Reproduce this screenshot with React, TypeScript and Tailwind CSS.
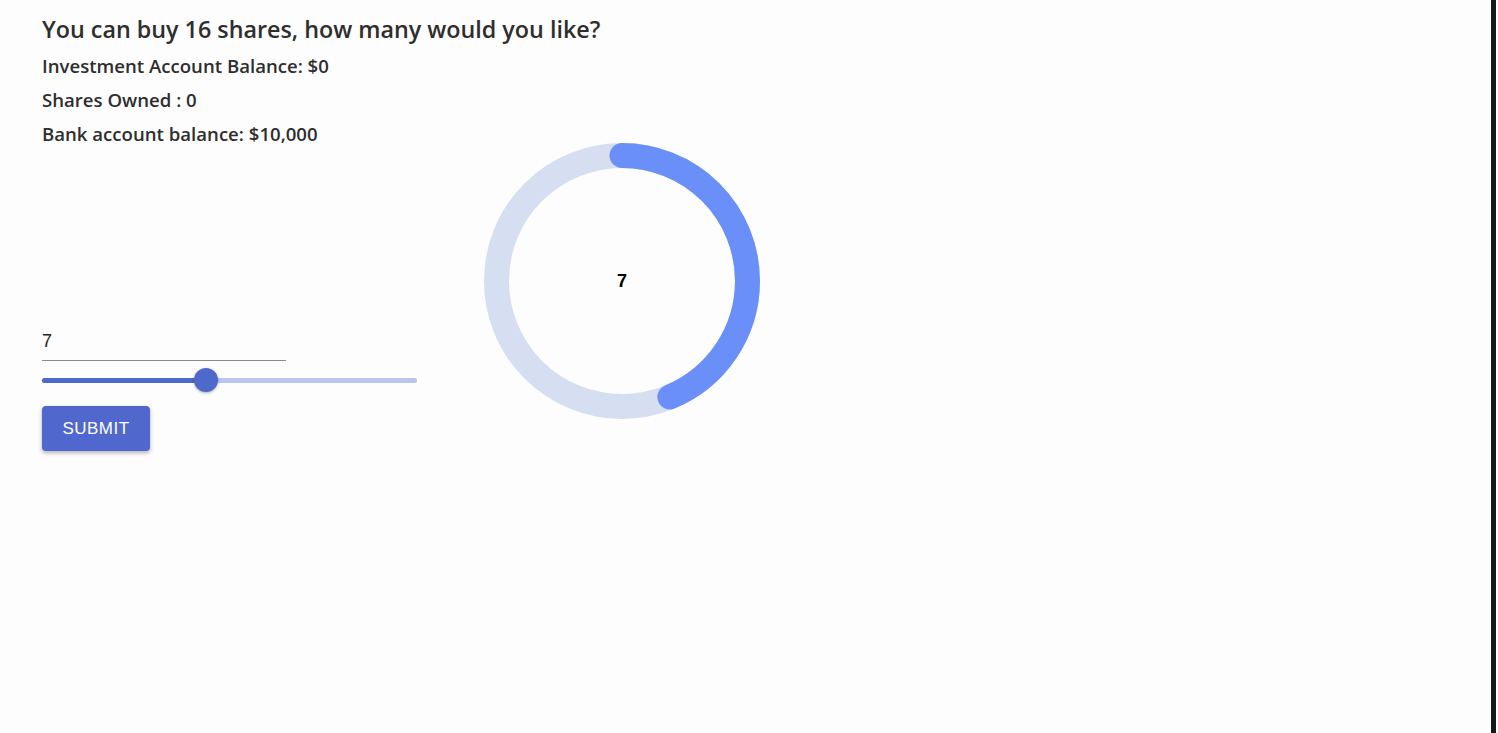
import React from 'react';

const max = 16;
const value = 7;

const Donut: React.FC<{ value: number; max: number }> = ({ value, max }) => {
  const r = 125.5;
  const c = 2 * Math.PI * r;
  const pct = value / max;
  return (
    <div className="relative w-[276px] h-[276px]">
      <svg width="276" height="276" viewBox="0 0 276 276">
        <circle cx="138" cy="138" r={r} fill="none" stroke="#d6def2" strokeWidth="25" />
        <circle
          cx="138"
          cy="138"
          r={r}
          fill="none"
          stroke="#6b8ff8"
          strokeWidth="25"
          strokeLinecap="round"
          strokeDasharray={`${c * pct} ${c}`}
          transform="rotate(-90 138 138)"
        />
      </svg>
      <div className="absolute inset-0 flex items-center justify-center text-[18px] font-bold text-black font-['Liberation_Sans',sans-serif]">
        {value}
      </div>
    </div>
  );
};

const App: React.FC = () => {
  const pct = (value / max) * 100;
  return (
    <div className="flex min-h-[733px] bg-[#fdfdfd]">
      <div className="flex-1 pl-[42px] pt-[14px] font-['Open_Sans',sans-serif] text-[#2e2e2e]">
        <h2 className="text-[23.3px] font-semibold leading-[30px]">
          You can buy 16 shares, how many would you like?
        </h2>
        <p className="mt-[12px] text-[18.6px] font-semibold leading-[20px]">Investment Account Balance: $0</p>
        <p className="mt-[14px] text-[18.6px] font-semibold leading-[20px]">Shares Owned : 0</p>
        <p className="mt-[14px] text-[18.6px] font-semibold leading-[20px]">Bank account balance: $10,000</p>

        <div className="flex items-start mt-[-1px]">
          <div className="w-[375px] pt-[187px] font-['Liberation_Sans',sans-serif]">
            <div className="w-[244px] border-b border-[#8a8a8a] pb-[6px]">
              <span className="text-[18px] leading-[22px] text-[#222]">{value}</span>
            </div>
            <div className="relative h-[24px] mt-[7px] flex items-center">
              <div className="w-full h-[5px] rounded-full bg-[#bac5ef]" />
              <div
                className="absolute left-0 h-[5px] rounded-full bg-[#4f68cc]"
                style={{ width: `${pct}%` }}
              />
              <div
                className="absolute w-[24px] h-[24px] -ml-[12px] rounded-full bg-[#4f68cc] shadow-[0_1px_3px_rgba(0,0,0,0.3)]"
                style={{ left: `${pct}%` }}
              />
            </div>
            <button className="mt-[14px] h-[45px] w-[108px] rounded-[4px] bg-[#5068cd] text-white text-[17px] tracking-[0.5px] shadow-[0_2px_4px_rgba(0,0,0,0.3)]">
              SUBMIT
            </button>
          </div>
          <div className="ml-[67px]">
            <Donut value={value} max={max} />
          </div>
        </div>
      </div>
      <div className="w-[5px] bg-[#14171c]" />
      <div className="w-[2px] bg-[#fdfdfd]" />
    </div>
  );
};

export default App;
